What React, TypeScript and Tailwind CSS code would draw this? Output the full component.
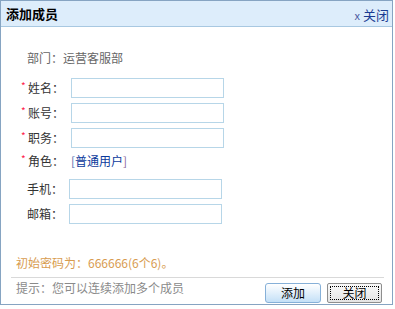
import React from "react";

const font = { fontFamily: '"Noto Sans CJK SC", "Liberation Sans", sans-serif' };

function ReqRow({ label }: { label: string }) {
  return (
    <div className="flex items-center h-[20px] pl-[20px]">
      <span className="w-[7px] text-[10px] leading-none text-[#ff1a4a] -mt-[5px]">*</span>
      <span className="w-[43px] text-[12px] leading-[16px] text-[#333]">{label}：</span>
      <input className="w-[153px] h-[20px] border border-[#b7d6e8] bg-white outline-none" />
    </div>
  );
}

function OptRow({ label }: { label: string }) {
  return (
    <div className="flex items-center h-[20px] pl-[26px]">
      <span className="w-[42px] text-[12px] leading-[16px] text-[#333]">{label}：</span>
      <input className="w-[153px] h-[20px] border border-[#b7d6e8] bg-white outline-none" />
    </div>
  );
}

export default function App() {
  return (
    <div className="w-[395px] h-[309px] bg-white" style={font}>
      <div className="w-[393px] h-[305px] border border-[#86a4c2] flex flex-col bg-white">
        <div className="h-[26px] shrink-0 bg-[#ddedfb] border-b border-[#a8c8e1] flex items-center justify-between pl-[5px] pr-[3px]">
          <span className="text-[13px] font-bold text-black leading-[16px]">添加成员</span>
          <span className="text-[13px] text-[#1a3b92] leading-[16px] mt-[3px]">
            <span className="text-[11px] mr-[3px] text-[#4a5aa0]">x</span>关闭
          </span>
        </div>
        <div className="flex flex-col">
          <div className="mt-[23px] h-[16px] pl-[26px] text-[12px] leading-[16px] text-[#666]">部门：运营客服部</div>
          <div className="mt-[12px] flex flex-col gap-[5px]">
            <ReqRow label="姓名" />
            <ReqRow label="账号" />
            <ReqRow label="职务" />
          </div>
          <div className="mt-[3px] flex items-center h-[20px] pl-[20px]">
            <span className="w-[7px] text-[10px] leading-none text-[#ff1a4a] -mt-[5px]">*</span>
            <span className="w-[43px] text-[12px] leading-[16px] text-[#333]">角色：</span>
            <span className="text-[12px] leading-[16px] text-[#0b3a9c]">
              <span className="text-[#4f6fb0]">[</span>普通用户<span className="text-[#8a6a9a]">]</span>
            </span>
          </div>
          <div className="mt-[8px] flex flex-col gap-[5px]">
            <OptRow label="手机" />
            <OptRow label="邮箱" />
          </div>
          <div className="mt-[31px] h-[16px] pl-[15px] text-[12px] leading-[16px] text-[#d89c4f]">
            初始密码为：666666(6个6)。
          </div>
          <div className="mt-[6px] ml-[10px] mr-[8px] h-px bg-[#d9d9d9]" />
          <div className="mt-[5px] flex items-start pl-[15px] pr-[10px]">
            <span className="text-[12px] leading-[16px] text-[#8a8a8a] -mt-[3px] flex-1">提示：您可以连续添加多个成员</span>
            <button className="w-[56px] h-[20px] rounded-[3px] border border-[#86b0d8] bg-gradient-to-b from-[#ffffff] to-[#c4e0f7] text-[12px] leading-[16px] text-black">
              添加
            </button>
            <button className="ml-[6px] w-[55px] h-[20px] rounded-[2px] border border-[#8e8e8e] bg-gradient-to-b from-[#fafafa] to-[#e4e4e4] text-[12px] leading-[16px] text-black p-[2px]">
              <span className="block w-full h-full border border-dotted border-black leading-[12px]">关闭</span>
            </button>
          </div>
        </div>
      </div>
    </div>
  );
}
